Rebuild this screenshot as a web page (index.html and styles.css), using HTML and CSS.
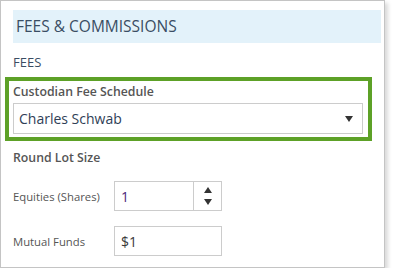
FILE: index.html
```html
<!DOCTYPE html>
<html lang="en">
<head>
    <meta charset="UTF-8">
    <title>Fees &amp; Commissions</title>
    <link rel="stylesheet" href="styles.css">
</head>
<body>

    <div class="panel">
        <div class="panel-header">FEES &amp; COMMISSIONS</div>

        <div class="section-title">FEES</div>

        <!-- Highlighted field -->
        <div class="highlight">
            <div class="field-label">Custodian Fee Schedule</div>
            <div class="select">
                <span class="select-value">Charles Schwab</span>
                <svg class="caret" width="8" height="6" viewBox="0 0 8 6"><path d="M0 0H8L4 6Z" fill="#333"/></svg>
            </div>
        </div>

        <div class="field-label round-lot">Round Lot Size</div>

        <div class="row">
            <span class="row-label">Equities (Shares)</span>
            <div class="input spin">
                <span class="input-value purple">1</span>
                <div class="spinner">
                    <svg width="8" height="6" viewBox="0 0 8 6"><path d="M0 6H8L4 0Z" fill="#333"/></svg>
                    <svg width="8" height="6" viewBox="0 0 8 6"><path d="M0 0H8L4 6Z" fill="#333"/></svg>
                </div>
            </div>
        </div>

        <div class="row mutual">
            <span class="row-label">Mutual Funds</span>
            <div class="input">
                <span class="input-value">$1</span>
            </div>
        </div>
    </div>

</body>
</html>
```

FILE: styles.css
```css
/* Global Styles */
body, html {
    margin: 0;
    padding: 0;
    background: white;
    font-family: 'Open Sans', 'Noto Sans', sans-serif;
    color: #555;
}

/* Panel */
.panel {
    width: 368px;
    height: 247px;
    padding: 9px 3px 10px 12px;
    border: 1px solid #c4c4c4;
    box-shadow: 3px 3px 4px rgba(0, 0, 0, 0.15);
}

.panel-header {
    height: 33px;
    line-height: 33px;
    padding-left: 3px;
    background: #e3f2fa;
    color: #3a4d63;
    font-size: 15.5px;
}

.section-title {
    margin-top: 9px;
    line-height: 20px;
    font-size: 13px;
    color: #3a4d63;
}

/* Green highlight box */
.highlight {
    margin: 5px 0 0 -8px;
    width: 350px;
    padding: 1px 5px 3px 4px;
    border: 4px solid #5da127;
}

.field-label {
    line-height: 20px;
    font-size: 12.3px;
    font-weight: 600;
    color: #555;
}

.select {
    margin-top: 1px;
    height: 29px;
    border: 1px solid #ccc;
    display: flex;
    align-items: center;
    justify-content: space-between;
    padding: 0 9px 0 5px;
}

.select-value {
    font-size: 14px;
    color: #2f3e56;
}

.round-lot {
    margin-top: 7px;
}

/* Rows */
.row {
    margin-top: 13px;
    display: flex;
    align-items: center;
    height: 30px;
}

.row.mutual {
    margin-top: 15px;
}

.row-label {
    width: 101px;
    font-size: 11.3px;
    color: #555;
}

.input {
    width: 106px;
    height: 28px;
    border: 1px solid #ccc;
    display: flex;
    align-items: center;
}

.input-value {
    padding-left: 6px;
    font-size: 14px;
    color: #3a3a3a;
    flex: 1;
}

.input-value.purple {
    color: #4b2a7b;
}

.spinner {
    width: 27px;
    height: 28px;
    border-left: 1px solid #ccc;
    display: flex;
    flex-direction: column;
    align-items: center;
    justify-content: center;
    gap: 6px;
}

.spinner svg {
    display: block;
}
```
